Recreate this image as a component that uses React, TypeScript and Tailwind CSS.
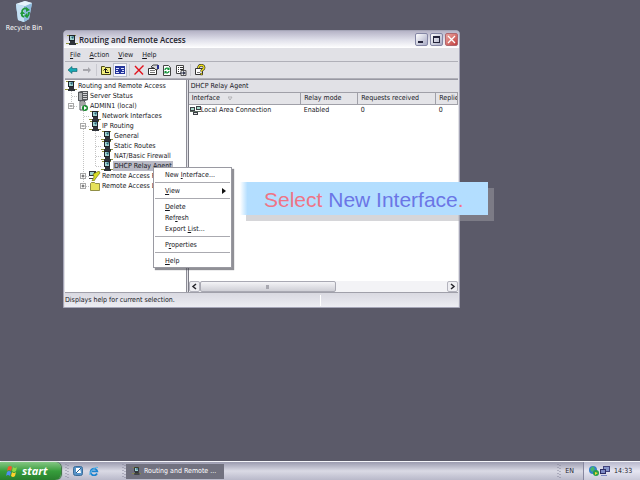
import type { ReactNode } from "react";

type IconName = "net" | "server" | "admin" | "policy" | "folder";
type Guide = "none" | "line" | "tee" | "end" | "minus" | "plus" | "minusEnd" | "plusEnd";

type TreeRow = {
  label: string;
  icon: IconName;
  guides: Guide[];
  selected?: boolean;
};

const TREE: TreeRow[] = [
  { label: "Routing and Remote Access", icon: "net", guides: [] },
  { label: "Server Status", icon: "server", guides: ["tee"] },
  { label: "ADMIN1 (local)", icon: "admin", guides: ["minusEnd"] },
  { label: "Network Interfaces", icon: "net", guides: ["none", "tee"] },
  { label: "IP Routing", icon: "net", guides: ["none", "minus"] },
  { label: "General", icon: "net", guides: ["none", "line", "tee"] },
  { label: "Static Routes", icon: "net", guides: ["none", "line", "tee"] },
  { label: "NAT/Basic Firewall", icon: "net", guides: ["none", "line", "tee"] },
  { label: "DHCP Relay Agent", icon: "net", guides: ["none", "line", "end"], selected: true },
  { label: "Remote Access P", icon: "policy", guides: ["none", "plus"] },
  { label: "Remote Access L", icon: "folder", guides: ["none", "plusEnd"] },
];

function Hotkey({ text, at }: { text: string; at: number }) {
  return (
    <>
      {text.slice(0, at)}
      <span className="underline">{text[at]}</span>
      {text.slice(at + 1)}
    </>
  );
}

function Computer() {
  return (
    <>
      <path d="M1 0h9v1H1z" fill="#8e913b" />
      <path d="M3 0h6v6H3z" fill="#20242a" />
      <path d="M4 1h4v4H4z" fill="#9fd3cf" />
      <path d="M5 2l2 2 1-3z" fill="#255f76" />
      <path d="M4 6h5v2H4z" fill="#30343a" />
      <path d="M0 8h12v1H0z" fill="#8e913b" />
      <path d="M3 8h7v2H3z" fill="#30343a" />
    </>
  );
}

function TreeIcon({ name }: { name: IconName }) {
  return (
    <svg viewBox="0 0 12 10" className="h-[10px] w-3 shrink-0" aria-hidden="true">
      {name === "net" && <Computer />}
      {name === "server" && (
        <>
          <path d="M1 1l3-1h7v9l-3 1H1z" fill="#55585c" />
          <path d="M2 2h3v7H2z" fill="#a9abae" />
          <path d="M6 1h4v1H6zM6 3h4v1H6zM6 5h4v1H6zM6 7h4v1H6z" fill="#d4d5d6" />
        </>
      )}
      {name === "admin" && (
        <>
          <path d="M3 0h4l1 1v8H3z" fill="#e6e6e6" stroke="#55585c" />
          <path d="M4 2h3M4 4h3" stroke="#666" />
          <circle cx="8" cy="7" r="3" fill="#178a2c" />
          <path d="M7 5l3 2-3 2z" fill="#fff" />
        </>
      )}
      {name === "policy" && (
        <>
          <path d="M0 0h7v5H0z" fill="#30343a" />
          <path d="M1 1h4v3H1z" fill="#9fd3cf" />
          <path d="M4 3l6-3 1 2-4 5-2 3H3l2-4z" fill="#d7dc25" stroke="#5d6010" strokeWidth=".6" />
          <path d="M0 7h4v1H0z" fill="#444" />
        </>
      )}
      {name === "folder" && (
        <path d="M1.500 2.500l1-1h3l1 1h4v7h-9z" fill="#e6e25a" stroke="#77762c" strokeWidth=".8" />
      )}
    </svg>
  );
}

function GuideCell({ kind }: { kind: Guide }) {
  const boxed = kind.startsWith("plus") || kind.startsWith("minus");
  const stops = kind === "end" || kind.endsWith("End");
  return (
    <svg viewBox="0 0 12 10" className="h-[10px] w-3 shrink-0" aria-hidden="true">
      {kind !== "none" && (
        <path d={stops ? "M6.500 0V5" : "M6.500 0V10"} stroke="#c4c4c4" strokeDasharray="1 1" />
      )}
      {kind !== "none" && kind !== "line" && (
        <path d="M7 5.500H12" stroke="#c4c4c4" strokeDasharray="1 1" />
      )}
      {boxed && (
        <>
          <rect x="3.500" y="2.500" width="5" height="5" fill="#fff" stroke="#a8a8a8" />
          <path d={kind.startsWith("plus") ? "M4.500 5h3M6 3.500v3" : "M4.500 5h3"} stroke="#333" strokeWidth=".8" />
        </>
      )}
    </svg>
  );
}

function ToolButton({ label, active, children }: { label: string; active?: boolean; children: ReactNode }) {
  return (
    <button
      type="button"
      aria-label={label}
      className={`flex h-[14px] w-[14px] items-center justify-center ${active ? "border border-[#b8bccb] bg-[#f6f7fb]" : ""}`}
    >
      <svg viewBox="0 0 12 12" className="h-3 w-3 shrink-0" fill="none" aria-hidden="true">
        {children}
      </svg>
    </button>
  );
}

function Toolbar() {
  return (
    <div className="flex h-[17px] items-center border-b border-[#b0b0b8] pl-[1px]">
      <ToolButton label="Back">
        <path d="M1 6l4-3.500v2h5v3H5v2z" fill="#17a9b5" stroke="#0b5f68" strokeWidth=".6" />
      </ToolButton>
      <ToolButton label="Forward">
        <path d="M10 6L7 3v2H2v2h5v2z" fill="#a6a6ac" />
      </ToolButton>
      <div className="mx-[2px] h-3 w-[1px] bg-[#c9c9d0]" />
      <ToolButton label="Up one level">
        <path d="M1.500 2.500h3l1 1h5v7h-9z" fill="#f2ef7c" stroke="#4c4b14" />
        <path d="M5 8.500h4M5.500 9V5M3.500 6.500l2-2 2 2" stroke="#111" />
      </ToolButton>
      <ToolButton label="Show console tree" active>
        <path d="M1 2h10v8H1z" fill="#24349a" />
        <path d="M2 4h3v1H2zM7 4h3v1H7zM2 8h3v1H2zM7 8h3v1H7z" fill="#dfe5ff" />
        <path d="M2 6h2v1H2zM8 6h2v1H8z" fill="#dfe5ff" />
      </ToolButton>
      <div className="mx-[2px] h-3 w-[1px] bg-[#c9c9d0]" />
      <ToolButton label="Delete">
        <path d="M2 2l8 8.500M10.500 1.500l-9 9" stroke="#e2121c" strokeWidth="1.400" />
      </ToolButton>
      <ToolButton label="Properties">
        <path d="M1.500 4.500h8v6h-8z" fill="#fff" stroke="#333" />
        <path d="M3 6.500h5M3 8.500h5" stroke="#777" />
        <path d="M4 3l2-2h5v4L9 6 7 4z" fill="#d6d6d6" stroke="#222" strokeWidth=".8" />
        <path d="M10 1h2v4h-2z" fill="#27318f" />
      </ToolButton>
      <ToolButton label="Refresh">
        <path d="M2.500 1.500h5l2 2v8h-7z" fill="#fff" stroke="#444" />
        <path d="M4 6c0-2 3-2.500 4-1M8 7c0 2-3 2.500-4 1" stroke="#129438" strokeWidth="1.300" />
        <path d="M8.500 3v3H6zM3.500 10V7H6z" fill="#129438" />
      </ToolButton>
      <ToolButton label="Export list">
        <path d="M1.500 1.500h7v8h-7z" fill="#fff" stroke="#444" />
        <path d="M3 3.500h1M5 3.500h3M3 5.500h1M5 5.500h3M3 7.500h1" stroke="#333" />
        <path d="M6 6.500h5v5H6z" fill="#f0f0f0" stroke="#333" strokeWidth=".8" />
        <path d="M5 8.500h3V7l3 2-3 2v-1.500H5z" fill="#33384f" />
      </ToolButton>
      <div className="mx-[2px] h-3 w-[1px] bg-[#c9c9d0]" />
      <ToolButton label="Help">
        <path d="M1.500 4.500h7v6h-7z" fill="#fff" stroke="#333" />
        <path d="M3 8.500h3" stroke="#777" />
        <path d="M4.500 4C4.500 0 10.500.5 10 4c-.3 1.500-2.500 1.500-2.500 3.500" stroke="#222" strokeWidth="2.600" />
        <path d="M4.500 4C4.500 0 10.500.5 10 4c-.3 1.500-2.500 1.500-2.500 3.500" stroke="#f2e21c" strokeWidth="1.400" />
        <path d="M6.500 9h2v2h-2z" fill="#e2cf10" stroke="#222" strokeWidth=".5" />
      </ToolButton>
    </div>
  );
}

const CAPTION_BUTTON =
  "flex h-[13px] w-[13px] items-center justify-center rounded-[2px] border";

function TitleBar() {
  return (
    <div className="flex h-[17px] items-center rounded-t-[3px] bg-linear-to-b from-[#b5b3c6] via-[#dedee9] to-white pl-[2px] pr-[1px]">
      <svg viewBox="0 0 12 10" className="h-[10px] w-3" aria-hidden="true">
        <Computer />
      </svg>
      <h1 className="flex-1 pl-[1px] font-['Open_Sans','Noto_Sans',sans-serif] text-[8px] leading-[10px] font-semibold text-[#24242c]">
        Routing and Remote Access
      </h1>
      <div className="flex gap-[2px]">
        <button type="button" aria-label="Minimize" className={`${CAPTION_BUTTON} border-[#8587a5] bg-linear-to-br from-white to-[#a8aac4]`}>
          <svg viewBox="0 0 11 11" className="h-[11px] w-[11px]" aria-hidden="true">
            <path d="M2 7h5v2H2z" fill="#24243c" />
          </svg>
        </button>
        <button type="button" aria-label="Maximize" className={`${CAPTION_BUTTON} border-[#8587a5] bg-linear-to-br from-white to-[#a8aac4]`}>
          <svg viewBox="0 0 11 11" className="h-[11px] w-[11px]" aria-hidden="true">
            <path d="M2 2h7v7H2zM3 4v4h5V4z" fill="#24243c" fillRule="evenodd" />
          </svg>
        </button>
        <button type="button" aria-label="Close" className={`${CAPTION_BUTTON} border-[#b0676f] bg-linear-to-br from-[#e9a5a0] to-[#c03b3e]`}>
          <svg viewBox="0 0 11 11" className="h-[11px] w-[11px]" aria-hidden="true">
            <path d="M2 2l7 7M9 2L2 9" stroke="#fff" strokeWidth="1.300" />
          </svg>
        </button>
      </div>
    </div>
  );
}

function ScrollArrow({ label, d }: { label: string; d: string }) {
  return (
    <button type="button" aria-label={label} className="flex w-[11px] items-center justify-center rounded-[2px] border border-[#b4b4be] bg-[#eeeef2]">
      <svg viewBox="0 0 7 7" className="h-[7px] w-[7px]" fill="none" aria-hidden="true">
        <path d={d} stroke="#26262c" strokeWidth="1.500" />
      </svg>
    </button>
  );
}

const HEAD_CELL =
  "overflow-hidden border-r border-b border-[#a0a0a8] bg-[#e4e4e8] pl-[3px] text-left font-normal whitespace-nowrap";

function DetailsPane() {
  return (
    <section className="flex min-w-0 flex-1 flex-col border-l border-[#7c7c86]">
      <h2 className="h-[13px] border-b border-[#a0a0a8] bg-[#e1e1e6] pl-[2px] leading-[12px]">DHCP Relay Agent</h2>
      <div className="flex-1 overflow-hidden bg-white">
        <table className="w-full table-fixed border-collapse">
          <colgroup>
            <col className="w-[112px]" />
            <col className="w-[57px]" />
            <col className="w-[78px]" />
            <col />
          </colgroup>
          <thead>
            <tr className="h-[11px] leading-[10px]">
              <th className={HEAD_CELL}>
                Interface
                <svg viewBox="0 0 5 5" className="ml-2 inline h-[5px] w-[5px]" fill="none" aria-hidden="true">
                  <path d="M0 1h4L2 4z" stroke="#b4b4b8" />
                </svg>
              </th>
              <th className={HEAD_CELL}>Relay mode</th>
              <th className={HEAD_CELL}>Requests received</th>
              <th className={HEAD_CELL}>Replies</th>
            </tr>
          </thead>
          <tbody>
            <tr className="h-[13px] leading-[11px]">
              <td className="whitespace-nowrap">
                <div className="flex items-center pl-[1px]">
                  <svg viewBox="0 0 11 10" className="h-[10px] w-[11px]" aria-hidden="true">
                    <path d="M0 1h5v4H0zM6 0h5v4H6zM3 6h5v3H3z" fill="#3b4046" />
                    <path d="M1 2h3v2H1zM7 1h3v2H7z" fill="#a7dccb" />
                    <path d="M4 7h3v1H4z" fill="#dedede" />
                    <path d="M0 5h11v1H0z" fill="#5c6b60" />
                  </svg>
                  Local Area Connection
                </div>
              </td>
              <td className="pl-[3px]">Enabled</td>
              <td className="pl-[3px]">0</td>
              <td className="pl-[3px]">0</td>
            </tr>
          </tbody>
        </table>
      </div>
      <div className="flex h-[11px] bg-[#f3f3f6]">
        <ScrollArrow label="Scroll left" d="M5 1L2 3.500 5 6" />
        <div className="flex-1">
          <div className="flex h-full w-[55%] items-center justify-center rounded-[2px] border border-[#a9a9b3] bg-linear-to-b from-[#f4f4f7] to-[#cfcfd6]">
            <span className="h-1 w-[3px] bg-[#a8a8b0]" />
          </div>
        </div>
        <ScrollArrow label="Scroll right" d="M2 1l3 2.500L2 6" />
      </div>
    </section>
  );
}

function MenuItem({ text, at, arrow }: { text: string; at: number; arrow?: boolean }) {
  return (
    <button type="button" role="menuitem" className="flex h-[11px] w-full items-center justify-between pr-1 pl-[10px] whitespace-nowrap">
      <span><Hotkey text={text} at={at} /></span>
      {arrow && (
        <svg viewBox="0 0 4 6" className="h-[6px] w-1" aria-hidden="true">
          <path d="M0 0l4 3-4 3z" fill="#111" />
        </svg>
      )}
    </button>
  );
}

function ContextMenu() {
  return (
    <div role="menu" className="absolute top-[136px] left-[89px] w-[79px] border border-[#9a9aa2] bg-white p-[1px] leading-[10px] shadow-[2px_2px_1px_rgba(70,70,80,0.6)]">
      <MenuItem text="New Interface..." at={4} />
      <hr className="my-[2px] border-[#aaaab0]" />
      <MenuItem text="View" at={0} arrow />
      <hr className="my-[2px] border-[#aaaab0]" />
      <MenuItem text="Delete" at={0} />
      <MenuItem text="Refresh" at={3} />
      <MenuItem text="Export List..." at={7} />
      <hr className="my-[2px] border-[#aaaab0]" />
      <MenuItem text="Properties" at={1} />
      <hr className="my-[2px] border-[#aaaab0]" />
      <MenuItem text="Help" at={0} />
    </div>
  );
}

function ConsoleWindow() {
  return (
    <main className="absolute top-[30px] left-[63px] w-[62%] rounded-t-[4px] border border-[#a5a5b7] bg-[#e1e1e6] text-[#16161c]">
      <TitleBar />
      <div className="mx-[1px]">
        <nav className="flex h-[14px] items-center gap-[9px] border-b border-[#b0b0b8] pl-[5px]">
          <button type="button"><Hotkey text="File" at={0} /></button>
          <button type="button"><Hotkey text="Action" at={0} /></button>
          <button type="button"><Hotkey text="View" at={0} /></button>
          <button type="button"><Hotkey text="Help" at={0} /></button>
        </nav>
        <Toolbar />
        <div className="flex min-h-[213px] border-t border-[#9898a2]">
          <ul className="w-[31%] shrink-0 overflow-hidden border-r border-[#8c8c96] bg-white pt-[1px]">
            {TREE.map((row) => (
              <li key={row.label} className="flex h-[10px] items-center whitespace-nowrap">
                {row.guides.map((kind, i) => (
                  <GuideCell key={i} kind={kind} />
                ))}
                <TreeIcon name={row.icon} />
                <span className={`px-[1px] leading-[10px] ${row.selected ? "bg-[#b9b9c4]" : ""}`}>{row.label}</span>
              </li>
            ))}
          </ul>
          <div className="w-[1px] shrink-0 bg-[#e1e1e6]" />
          <DetailsPane />
        </div>
        <footer className="flex h-[15px] items-center border-t border-[#a0a0aa] bg-linear-to-b from-[#d9d9e1] to-[#ededf3]">
          <span className="w-[65%]">Displays help for current selection.</span>
          <span className="h-[11px] w-[1px] bg-white" />
        </footer>
      </div>
      <ContextMenu />
    </main>
  );
}

function Grip() {
  return (
    <svg viewBox="0 0 4 14" className="h-[14px] w-1 shrink-0" aria-hidden="true">
      <path d="M1 0v14M3 1v13" stroke="#85859a" strokeDasharray="1 2" />
    </svg>
  );
}

function Taskbar() {
  return (
    <footer className="flex h-[19px] shrink-0 items-stretch border-t border-[#f5f5fa] bg-linear-to-b from-[#9b9baf] via-[#dadae5] to-[#b9b9ca]">
      <button
        type="button"
        className="flex w-[61px] items-center gap-1 rounded-r-md bg-linear-to-b from-[#83c683] via-[#379e3c] to-[#297f2e] pl-[6px] font-['Open_Sans','Noto_Sans',sans-serif] text-[11px] leading-[14px] font-bold text-white italic shadow-[1px_0_1px_#326b38]"
      >
        <svg viewBox="0 0 12 12" className="h-3 w-3 shrink-0" aria-hidden="true">
          <path d="M2 2q2-2 4 0L5 6Q3 4 1 6z" fill="#ef5b2b" />
          <path d="M7 2q2 2 4 0l-1 4Q8 8 6 6z" fill="#8fdc45" />
          <path d="M1 7q2-2 4 0l-1 4q-2-2-4 0z" fill="#4f8df2" />
          <path d="M6 7q2 2 4 0l-1 4q-2 2-4 0z" fill="#ffd12e" />
        </svg>
        start
      </button>
      <div className="flex flex-1 items-center">
        <div className="flex w-[65px] items-center gap-1 pl-1">
          <Grip />
          <button type="button" aria-label="Show desktop">
            <svg viewBox="0 0 10 10" className="h-[10px] w-[10px]" aria-hidden="true">
              <rect x=".5" y=".5" width="9" height="9" rx="2" fill="#5793c8" stroke="#3c6c98" />
              <path d="M3 2h4l1 5H3z" fill="#fff" />
              <path d="M3 7l5-5" stroke="#2c618f" />
            </svg>
          </button>
          <button type="button" aria-label="Internet Explorer" className="ml-[2px]">
            <svg viewBox="0 0 10 10" className="h-[10px] w-[10px]" fill="none" aria-hidden="true">
              <path d="M8 7.500A3.400 3.400 0 1 1 8.300 5.400H3" stroke="#1b83cf" strokeWidth="1.800" />
              <path d="M1 9C-.5 7 6 0 9 1.500" stroke="#4fb4ea" />
            </svg>
          </button>
          <div className="flex-1" />
          <Grip />
        </div>
        <button
          type="button"
          className="flex h-[15px] w-[98px] items-center gap-[3px] bg-[#71717f] pl-[6px] whitespace-nowrap text-white"
        >
          <svg viewBox="0 0 12 10" className="h-[10px] w-[9px]" aria-hidden="true">
            <Computer />
          </svg>
          Routing and Remote ...
        </button>
      </div>
      <div className="flex items-center gap-1 pr-[9px] text-[#24242e]">
        <Grip />
        <span>EN</span>
      </div>
      <div className="flex w-[57px] items-center border-l border-[#8888a0] bg-linear-to-b from-[#b8b8cc] via-[#e6e6f2] to-[#cacada] pl-[5px] text-[#24242e]">
        <svg viewBox="0 0 10 10" className="h-[10px] w-[10px]" aria-hidden="true">
          <circle cx="4" cy="4" r="4" fill="#347fca" />
          <path d="M1 3l3-3 2 3-3 3z" fill="#46b66b" />
          <circle cx="7" cy="7" r="3" fill="#27a045" />
          <path d="M6 6l3 1-3 2z" fill="#f0d43a" />
        </svg>
        <svg viewBox="0 0 10 10" className="ml-[1px] h-[10px] w-[10px]" aria-hidden="true">
          <path d="M3 0h7v6H3z" fill="#43447e" />
          <path d="M4 1h5v4H4z" fill="#8594ca" />
          <path d="M0 3h6v5H0z" fill="#2d2e66" />
          <path d="M1 4h4v3H1zM1 9h6v1H1z" fill="#7d8ac4" />
        </svg>
        <span className="ml-1">14:33</span>
      </div>
    </footer>
  );
}

export default function App() {
  return (
    <div className="flex min-h-screen flex-col bg-[#5b5a69] font-['DejaVu_Sans_Condensed','DejaVu_Sans',sans-serif] text-[7px] leading-[10px]">
      <div className="relative flex-1">
        <button type="button" className="absolute top-[1px] left-[3px] flex w-[42px] flex-col items-center gap-[1px] text-white">
          <svg viewBox="0 0 20 21" className="h-[21px] w-5" aria-hidden="true">
            <path d="M2 3l9-3 7 2-3 16-5 3-6-2z" fill="#b6d5ec" />
            <path d="M2 3l9 2 7-3-3 16-5 3-6-2z" fill="#8ebbdd" />
            <path d="M2 3l8 2v16l-6-2z" fill="#c5e0f3" />
            <path d="M2 3l9-3 7 2-7 3z" fill="#e7f4fc" />
            <path d="M8 10q2-4 5-2M15 11q0 4-3 5M10 16q-3-1-2-4" stroke="#20993a" strokeWidth="1.800" fill="none" />
            <path d="M12 6l4 3-4 2zM14 17l-4-2 3-3zM6 13l2-4 3 4z" fill="#20993a" />
          </svg>
          <span className="whitespace-nowrap">Recycle Bin</span>
        </button>
        <ConsoleWindow />
        <p className="absolute top-[182px] left-[240px] bg-linear-to-r from-[#b3deff]/0 via-[#b3deff] via-3% to-[#b3deff] pt-[5px] pr-6 pb-[3px] pl-6 font-['Liberation_Sans',Arial,sans-serif] text-[21px] leading-[25px] whitespace-nowrap text-[#6b76e6] shadow-[6px_6px_0_rgba(165,165,170,0.45)]">
          <span className="text-[#ef7486]">Select</span> New Interface<span className="text-[#ef7486]">.</span>
        </p>
      </div>
      <Taskbar />
    </div>
  );
}
